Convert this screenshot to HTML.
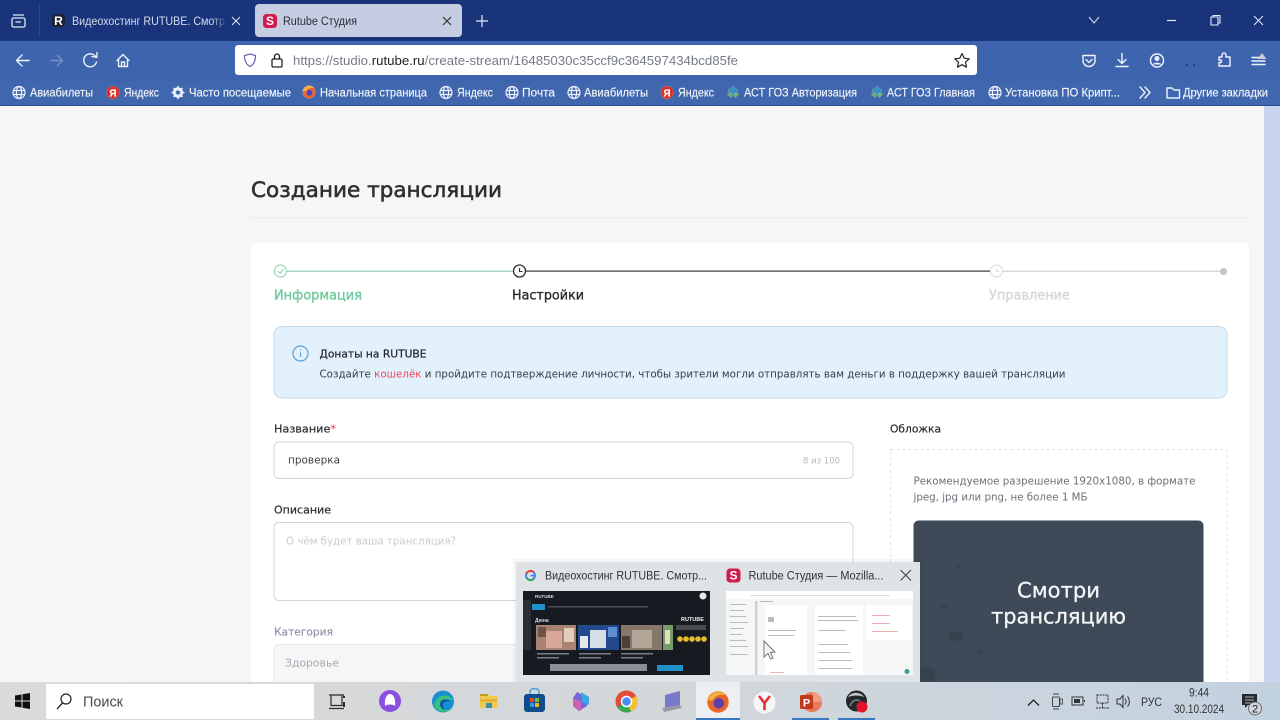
<!DOCTYPE html>
<html lang="ru"><head><meta charset="utf-8"><title>Rutube Студия</title>
<style>
html,body{margin:0;padding:0;width:1280px;height:720px;overflow:hidden;background:#f6f6f6}
svg{display:block}
text{white-space:pre}
.c{font-family:"Liberation Sans","Noto Sans CJK SC",sans-serif}
.p{font-family:"DejaVu Sans","Liberation Sans",sans-serif}
.w{fill:none;stroke:#eef2fa;stroke-width:1.4;stroke-linecap:round;stroke-linejoin:round}
.g{fill:none;stroke:#eef2fa;stroke-width:1.2}
.t{fill:none;stroke:#333;stroke-width:1.2;stroke-linecap:round;stroke-linejoin:round}
</style></head><body>
<svg width="1280" height="720" viewBox="0 0 1280 720" xmlns="http://www.w3.org/2000/svg">
<defs>
<linearGradient id="tb" x1="0" x2="1" y1="0" y2="0"><stop offset="0" stop-color="#dadada"/><stop offset=".5" stop-color="#d3d7da"/><stop offset="1" stop-color="#c3d2e0"/></linearGradient>
<linearGradient id="fade" x1="0" x2="1" y1="0" y2="0"><stop offset="0" stop-color="#19347b" stop-opacity="0"/><stop offset="1" stop-color="#19347b"/></linearGradient>
<filter id="b1" x="-2%" y="-2%" width="104%" height="104%"><feGaussianBlur stdDeviation=".6"/></filter>
<filter id="b2" x="-2%" y="-2%" width="104%" height="104%"><feGaussianBlur stdDeviation=".35"/></filter>
<g id="globe"><circle cx="0" cy="0" r="6" class="g"/><ellipse cx="0" cy="0" rx="2.6" ry="6" class="g"/><path d="M-6 -2H6M-6 2H6" class="g"/></g>
<g id="ya"><circle r="6.5" fill="#d9302c"/><text x="0" y="4" text-anchor="middle" class="c" font-size="10" font-weight="700" fill="#fff">Я</text></g>
<g id="ff"><circle r="6.5" fill="#e8662c"/><circle r="3.2" cx=".5" cy=".8" fill="#5a3fa8"/><path d="M-6 -1C-5 -6 1 -8 5 -4C2 -5 -2 -4 -3 -1Z" fill="#f4b23a"/></g>
<g id="ast"><path d="M0 -6L5 -2L3 4L-3 4L-5 -2Z" fill="#3a8fc4"/><path d="M-6 2L-2 6L-1 1Z" fill="#6fb04a"/><path d="M6 2L2 6L1 1Z" fill="#7bb24f"/></g>
<g id="s"><rect x="-7" y="-7" width="14" height="14" rx="3.5" fill="#d11a4d"/><text x="0" y="4.2" text-anchor="middle" class="c" font-size="12" font-weight="700" fill="#fff">S</text></g>
<clipPath id="page"><rect x="0" y="106" width="1280" height="576"/></clipPath>
</defs>

<!-- browser chrome -->
<rect width="1280" height="41" fill="#19347b"/>
<rect y="41" width="1280" height="41" fill="#3e64ae"/>
<rect y="82" width="1280" height="23" fill="#4066ae"/>
<rect y="105" width="1280" height="1" fill="#2a4a8c"/>

<!-- tab strip -->
<g fill="none" stroke="#dfe6f4" stroke-width="1.3"><rect x="12" y="18" width="13" height="9" rx="1.5"/><path d="M13 15H24M15.5 22H21"/></g>
<rect x="39" y="4" width="1" height="33" fill="#2d4a90"/>
<rect x="52" y="14" width="13" height="13" rx="3" fill="#1d2433"/>
<text x="58.5" y="25" text-anchor="middle" class="c" font-size="12" font-weight="700" fill="#fff">R</text>
<text x="72" y="25" class="c" font-size="11.5" fill="#d3dbec" textLength="153" lengthAdjust="spacingAndGlyphs">Видеохостинг RUTUBE. Смотр</text>
<rect x="212" y="8" width="15" height="26" fill="url(#fade)"/>
<path d="M232 17L240 25M240 17L232 25" stroke="#dfe6f4" stroke-width="1"/>
<rect x="255" y="4" width="207" height="33" rx="4" fill="#c5cde2"/>
<use href="#s" x="270" y="21"/>
<text x="283" y="25" class="c" font-size="11.5" fill="#2b2f3a" textLength="74" lengthAdjust="spacingAndGlyphs">Rutube Студия</text>
<path d="M443 17L451 25M451 17L443 25" stroke="#333" stroke-width="1.2"/>
<path d="M482 15V27M476 21H488" stroke="#e6ecf7" stroke-width="1.2"/>
<path d="M1089 17L1094 23L1099 17" fill="none" stroke="#c6d2e8" stroke-width="1.2"/>
<path d="M1167 20.500H1176" stroke="#e6ecf7" stroke-width="1.2"/>
<path d="M1211 17H1218V25H1211ZM1213 17V15.500H1220V23H1218" fill="none" stroke="#e6ecf7" stroke-width="1.1"/>
<path d="M1254 16L1263 25M1263 16L1254 25" stroke="#e6ecf7" stroke-width="1"/>

<!-- nav toolbar -->
<path d="M29 60.500H17M22 55L16.500 60.500L22 66" class="w"/>
<path d="M50 60.500H62M57 55L62.500 60.500L57 66" fill="none" stroke="#7390c8" stroke-width="1.4"/>
<path d="M95.500 56.500A6.500 6.500 0 1 0 96.500 62" class="w"/><path d="M92 56.500L96.800 57.500L97 52.500" class="w"/>
<path d="M117 60.500L123 54.500L129 60.500M118.500 59.500V66.500H127.500V59.500M121.500 66.500V62H124.500V66.500" class="w"/>
<rect x="235" y="45" width="742" height="30" rx="3" fill="#fff"/>
<path d="M250 54L255.500 55.500C255.500 61 254 64.500 250 66.500C246 64.500 244.500 61 244.500 55.500Z" fill="none" stroke="#6a62b8" stroke-width="1.2"/>
<rect x="272" y="59" width="10" height="8" rx="1.2" fill="none" stroke="#222" stroke-width="1.3"/><path d="M274.500 59V56.500A2.500 2.500 0 0 1 279.500 56.500V59" fill="none" stroke="#222" stroke-width="1.3"/>
<text y="65" class="c" font-size="12.500" fill="#767b85" x="293" textLength="445" lengthAdjust="spacingAndGlyphs">https://studio.<tspan fill="#222">rutube.ru</tspan>/create-stream/16485030c35ccf9c364597434bcd85fe</text>
<path d="M962 53.500L964.200 58.200L969.200 58.800L965.500 62.200L966.500 67.200L962 64.700L957.500 67.200L958.500 62.200L954.800 58.800L959.800 58.200Z" fill="none" stroke="#222" stroke-width="1.2" stroke-linejoin="round"/>
<path d="M1083 55.500H1095V60.500C1095 64 1092 66.500 1089 66.500C1086 66.500 1083 64 1083 60.500Z" class="w"/><path d="M1086 59.500L1089 62.500L1092 59.500" class="w"/>
<path d="M1122 53.500V63M1118 59.500L1122 63.500L1126 59.500M1116 66.500H1128" class="w"/>
<circle cx="1157" cy="60.500" r="6.500" class="w"/><circle cx="1157" cy="58.500" r="2.500" fill="#eef2fa"/><path d="M1152.500 64.500C1154 62 1160 62 1161.500 64.500Z" fill="#eef2fa"/>
<circle cx="1187" cy="65" r="1" fill="#24385f"/><circle cx="1194" cy="65" r="1" fill="#24385f"/>
<path d="M1219 57H1222V55A2 2 0 0 1 1226 55V57H1230V66H1219V62.500H1221A1.800 1.800 0 0 0 1221 60H1219Z" class="w"/>
<path d="M1252 57.500H1260M1252 61H1265M1252 64.500H1265" class="w"/><path d="M1262 53L1266.500 59H1257.500Z" fill="#c8cdd8"/>

<!-- bookmarks -->
<g class="c" font-size="11.500" fill="#f1f4fa" stroke="#f1f4fa" stroke-width=".15">
<use href="#globe" x="19" y="92.500"/><text x="30" y="96.500" textLength="63" lengthAdjust="spacingAndGlyphs">Авиабилеты</text>
<use href="#ya" x="113" y="92.500"/><text x="124" y="96.500" textLength="35" lengthAdjust="spacingAndGlyphs">Яндекс</text>
<circle cx="178" cy="92.500" r="4" fill="none" stroke="#eef2fa" stroke-width="2.400"/><path d="M178 86V99M171.500 92.500H184.500M173.500 88L182.500 97M182.500 88L173.500 97" stroke="#eef2fa" stroke-width="1.500"/><circle cx="178" cy="92.500" r="2" fill="#4066ae" stroke="none"/>
<text x="189" y="96.500" textLength="102" lengthAdjust="spacingAndGlyphs">Часто посещаемые</text>
<use href="#ff" x="309" y="92"/><text x="320" y="96.500" textLength="107" lengthAdjust="spacingAndGlyphs">Начальная страница</text>
<use href="#globe" x="446" y="92.500"/><text x="457" y="96.500" textLength="36" lengthAdjust="spacingAndGlyphs">Яндекс</text>
<use href="#globe" x="512" y="92.500"/><text x="522" y="96.500" textLength="33" lengthAdjust="spacingAndGlyphs">Почта</text>
<use href="#globe" x="574" y="92.500"/><text x="584" y="96.500" textLength="64" lengthAdjust="spacingAndGlyphs">Авиабилеты</text>
<use href="#ya" x="667" y="92.500"/><text x="678" y="96.500" textLength="36" lengthAdjust="spacingAndGlyphs">Яндекс</text>
<use href="#ast" x="733" y="92"/><text x="744" y="96.500" textLength="113" lengthAdjust="spacingAndGlyphs">АСТ ГОЗ Авторизация</text>
<use href="#ast" x="877" y="92"/><text x="887" y="96.500" textLength="88" lengthAdjust="spacingAndGlyphs">АСТ ГОЗ Главная</text>
<use href="#globe" x="995" y="92.500"/><text x="1005" y="96.500" textLength="115" lengthAdjust="spacingAndGlyphs">Установка ПО Крипт...</text>
<text x="1183" y="96.500" textLength="85" lengthAdjust="spacingAndGlyphs">Другие закладки</text>
</g>
<path d="M1140 87L1145 92.500L1140 98M1145 87L1150 92.500L1145 98" class="w"/>
<path d="M1167 88H1172L1174 90H1179.500V98H1167Z" class="w"/>

<!-- page -->
<g clip-path="url(#page)">
<rect y="106" width="1264" height="576" fill="#f6f6f6"/>
<rect x="1264" y="106" width="16" height="576" fill="#c9d5ee"/>
<text x="251" y="197" class="p" font-size="21" fill="#2e2e33" stroke="#2e2e33" stroke-width=".55" textLength="251" lengthAdjust="spacingAndGlyphs">Создание трансляции</text>
<rect x="251" y="217" width="998" height="1.500" fill="#efefef"/>
<rect x="251" y="243" width="998" height="460" rx="4" fill="#fff"/>

<!-- stepper -->
<rect x="287" y="270.700" width="226" height="1" fill="#7fcba6"/>
<rect x="526" y="270.500" width="464" height="1.200" fill="#33363b"/>
<rect x="1003" y="270.700" width="218" height="1" fill="#c4c6c9"/>
<circle cx="280.500" cy="271" r="6" fill="#fff" stroke="#9bd6b8" stroke-width="1.200"/><path d="M277.500 271L280 273.500L283.500 269" fill="none" stroke="#9bd6b8" stroke-width="1.100"/>
<circle cx="519.500" cy="271" r="6" fill="#fff" stroke="#2d3034" stroke-width="1.300"/><path d="M519.500 268V271.500H522.500" fill="none" stroke="#2d3034" stroke-width="1.100"/>
<circle cx="996.500" cy="271" r="6" fill="#fff" stroke="#dedfe2" stroke-width="1.200"/><path d="M996.500 268V271.500H999.500" fill="none" stroke="#dedfe2" stroke-width="1"/>
<circle cx="1223.500" cy="271.500" r="3.500" fill="#c2c4c7"/>
<g class="p" font-size="13">
<text x="274" y="299.500" fill="#6fcb9f" stroke="#6fcb9f" stroke-width=".4" textLength="88" lengthAdjust="spacingAndGlyphs">Информация</text>
<text x="512" y="299.500" fill="#2a2c30" stroke="#2a2c30" stroke-width=".35" textLength="72" lengthAdjust="spacingAndGlyphs">Настройки</text>
<text x="989" y="299.500" fill="#d5d7dd" stroke="#d5d7dd" stroke-width=".4" textLength="81" lengthAdjust="spacingAndGlyphs">Управление</text>
</g>

<!-- alert -->
<rect x="274" y="326.500" width="953" height="71.500" rx="8" fill="#e3f1fc" stroke="#c5d9e8"/>
<circle cx="300.500" cy="353.500" r="7.500" fill="none" stroke="#55a3d6" stroke-width="1.200"/>
<path d="M300.500 352.500V357M300.500 349.500V350.700" stroke="#55a3d6" stroke-width="1.100"/>
<g class="p" font-size="11">
<text x="319.500" y="357.500" fill="#1f2228" stroke="#1f2228" stroke-width=".2" textLength="107" lengthAdjust="spacingAndGlyphs">Донаты на RUTUBE</text>
<text x="319.500" y="377.500" fill="#3a3d44" textLength="746" lengthAdjust="spacingAndGlyphs">Создайте <tspan fill="#e9495c">кошелёк</tspan> и пройдите подтверждение личности, чтобы зрители могли отправлять вам деньги в поддержку вашей трансляции</text>
</g>

<!-- form fields -->
<rect x="274" y="442" width="579" height="36.500" rx="5" fill="#fff" stroke="#d2d4d8"/>
<rect x="274" y="522.500" width="579" height="78" rx="5" fill="#fff" stroke="#d2d4d8"/>
<rect x="274" y="644.500" width="579" height="50" rx="5" fill="#f6f6f7" stroke="#e6e7e9"/>
<g class="p" font-size="11">
<text x="274" y="432.500" fill="#2a2c30" stroke="#2a2c30" stroke-width=".2" textLength="62" lengthAdjust="spacingAndGlyphs">Название<tspan fill="#ec5b6e" stroke="#ec5b6e">*</tspan></text>
<text x="288" y="463.500" fill="#3c3f46" textLength="52" lengthAdjust="spacingAndGlyphs">проверка</text>
<text x="803" y="463.500" font-size="8.500" fill="#b5b8bd" textLength="37" lengthAdjust="spacingAndGlyphs">8 из 100</text>
<text x="274" y="513.500" fill="#2a2c30" stroke="#2a2c30" stroke-width=".2" textLength="57" lengthAdjust="spacingAndGlyphs">Описание</text>
<text x="286" y="544.500" fill="#c8cace" textLength="170" lengthAdjust="spacingAndGlyphs">О чём будет ваша трансляция?</text>
<text x="274" y="635.500" fill="#8e97a6" stroke="#8e97a6" stroke-width=".2" textLength="59" lengthAdjust="spacingAndGlyphs">Категория</text>
<text x="285" y="666.500" fill="#a5abb6" textLength="54" lengthAdjust="spacingAndGlyphs">Здоровье</text>
<text x="890" y="432.500" fill="#2a2c30" stroke="#2a2c30" stroke-width=".2" textLength="51" lengthAdjust="spacingAndGlyphs">Обложка</text>
<text x="913.500" y="484.500" fill="#6c6f76" textLength="282" lengthAdjust="spacingAndGlyphs">Рекомендуемое разрешение 1920x1080, в формате</text>
<text x="913.500" y="500.500" fill="#6c6f76" textLength="174" lengthAdjust="spacingAndGlyphs">jpeg, jpg или png, не более 1 МБ</text>
</g>

<rect x="890.500" y="449.500" width="336.500" height="260" fill="none" stroke="#dfe0e2" stroke-dasharray="3 3"/>
<rect x="913.500" y="520.500" width="290" height="190" rx="5" fill="#3f4a58"/>
<g fill="#38424f" filter="url(#b1)"><circle cx="958" cy="567" r="2.500"/><circle cx="944" cy="607" r="2.500"/><rect x="949" y="632" width="14" height="9"/><circle cx="980" cy="652" r="3"/><circle cx="928" cy="674" r="8"/></g>
<g class="p" font-size="21" fill="#f3f5f7" stroke="#f3f5f7" stroke-width=".3" text-anchor="middle">
<text x="1058.500" y="597.500" textLength="83" lengthAdjust="spacingAndGlyphs">Смотри</text>
<text x="1058.500" y="623.500" textLength="135" lengthAdjust="spacingAndGlyphs">трансляцию</text>
</g>

<!-- thumbnail popup -->
<rect x="513" y="559" width="409" height="125" fill="#000" opacity=".035"/>
<rect x="516" y="562" width="404" height="120" fill="#dfe3e6"/>
<g>
<circle cx="530.500" cy="575.500" r="4.500" fill="none" stroke="#4285f4" stroke-width="2"/>
<path d="M526.500 573.500A4.500 4.500 0 0 1 534 572.500" fill="none" stroke="#ea4335" stroke-width="2"/>
<path d="M526.500 577.500A4.500 4.500 0 0 0 533.500 579" fill="none" stroke="#34a853" stroke-width="2"/>
<rect x="530.500" y="574.700" width="5" height="1.800" fill="#4285f4"/>
<text x="545" y="579.500" class="c" font-size="11.500" fill="#30343a" textLength="162" lengthAdjust="spacingAndGlyphs">Видеохостинг RUTUBE. Смотр...</text>
<use href="#s" x="733.500" y="575.500"/>
<text x="748.500" y="579.500" class="c" font-size="11.500" fill="#30343a" textLength="135" lengthAdjust="spacingAndGlyphs">Rutube Студия — Mozilla...</text>
<path d="M900.500 570L911 580.500M911 570L900.500 580.500" stroke="#3a3d42" stroke-width="1"/>
</g>
<rect x="523" y="591" width="187" height="84" fill="#171a20"/>
<g filter="url(#b2)">
<text x="535" y="598" class="c" font-size="4.500" font-weight="700" fill="#d6d9de">RUTUBE</text>
<circle cx="703" cy="596" r="3.500" fill="#e8e8e8"/>
<rect x="532" y="604" width="13" height="6" fill="#2490c9"/><rect x="548" y="606" width="100" height="1.500" fill="#4a4e55"/>
<rect x="523" y="600" width="8" height="50" fill="#2a2e35"/>
<text x="535" y="622" class="c" font-size="5" font-weight="700" fill="#d6d9de">Дюна</text>
<text x="681" y="621" class="c" font-size="5.500" font-weight="700" fill="#eee">RUTUBE</text>
<rect x="536" y="625" width="40" height="25" fill="#a88372"/><rect x="546" y="631" width="16" height="17" fill="#d8a99b"/><rect x="538" y="627" width="8" height="10" fill="#6e5246"/><rect x="564" y="628" width="10" height="14" fill="#e0cdbd"/>
<rect x="578" y="625" width="41" height="25" fill="#244a8c"/><rect x="590" y="630" width="16" height="18" fill="#d5dfe8"/><rect x="580" y="636" width="8" height="12" fill="#e6e8ee"/><rect x="608" y="627" width="9" height="10" fill="#5b8ed0"/>
<rect x="621" y="625" width="41" height="25" fill="#85786a"/><rect x="632" y="630" width="20" height="18" fill="#b2a89a"/><rect x="622" y="636" width="8" height="12" fill="#4c4036"/>
<rect x="663" y="625" width="10" height="25" fill="#7a9a6a"/><rect x="665" y="630" width="5" height="14" fill="#dfe2b5"/>
<g fill="#e5bd2d"><circle cx="680" cy="639" r="2.800"/><circle cx="686" cy="639" r="2.800"/><circle cx="692" cy="639" r="2.800"/><circle cx="698" cy="639" r="2.800"/><circle cx="704" cy="639" r="2.800"/></g>
<rect x="676" y="625" width="30" height="5" fill="#6a6d72" opacity=".6"/>
<g fill="#7a7d83"><rect x="537" y="653" width="32" height="1.500"/><rect x="579" y="653" width="32" height="1.500"/><rect x="621" y="653" width="32" height="1.500"/><rect x="537" y="657" width="22" height="1.500"/><rect x="579" y="657" width="22" height="1.500"/><rect x="621" y="657" width="22" height="1.500"/></g>
<rect x="550" y="664" width="97" height="7" fill="#8b8e94"/><rect x="657" y="665" width="26" height="6" fill="#2490c9"/>
</g>

<rect x="726" y="591" width="187" height="84" fill="#f5f6f6"/>
<g filter="url(#b2)">
<rect x="726" y="591" width="187" height="8" fill="#fff"/><rect x="750" y="595" width="140" height="1" fill="#dcdcde"/>
<rect x="755" y="601" width="2.500" height="74" fill="#cfd0d2"/>
<rect x="765" y="605" width="42" height="70" fill="#fff"/><rect x="815" y="605" width="48" height="70" fill="#fff"/><rect x="866" y="605" width="46" height="35" fill="#fff"/>
<g fill="#b9bbbf">
<rect x="730" y="604" width="16" height="1"/><rect x="730" y="610" width="14" height="1"/><rect x="730" y="616" width="16" height="1"/><rect x="730" y="622" width="18" height="1"/><rect x="730" y="628" width="14" height="1"/><rect x="730" y="634" width="12" height="1"/><rect x="730" y="640" width="16" height="1"/><rect x="730" y="646" width="18" height="1"/><rect x="730" y="654" width="18" height="1"/><rect x="760" y="601" width="13" height="1"/>
<rect x="768" y="617" width="6" height="5"/><rect x="768" y="630" width="28" height="1"/><rect x="768" y="635" width="26" height="1"/>
<rect x="818" y="616" width="38" height="1"/><rect x="818" y="620" width="40" height="1"/><rect x="818" y="630" width="28" height="1"/><rect x="818" y="644" width="30" height="1"/><rect x="818" y="652" width="32" height="1"/><rect x="818" y="660" width="34" height="1"/><rect x="818" y="668" width="34" height="1"/></g>
<g fill="#ecb3b3"><rect x="872" y="615" width="18" height="1"/><rect x="872" y="623" width="18" height="1"/><rect x="872" y="631" width="26" height="1"/><rect x="770" y="672" width="14" height="1"/></g>
</g>
<circle cx="907" cy="671.500" r="2.500" fill="#3a9c93"/>
<path d="M764 641V657L768 653.500L770.500 659L773 658L770.500 652.500L775 652Z" fill="#f2f3f4" stroke="#6a6e74" stroke-width=".9"/>
</g>

<!-- taskbar -->
<rect y="682" width="1280" height="38" fill="url(#tb)"/>
<path d="M15 695.500L21.500 694.500V700.500H15ZM22.500 694.300L30 693V700.500H22.500ZM15 701.500H21.500V707.500L15 706.500ZM22.500 701.500H30V709L22.500 707.700Z" fill="#111"/>
<rect x="46" y="684" width="268" height="35" rx="1" fill="#fff"/>
<circle cx="66" cy="699" r="5" fill="none" stroke="#222" stroke-width="1.200"/><path d="M62.500 703L57 709" stroke="#222" stroke-width="1.300"/>
<text x="83" y="706.500" class="c" font-size="14.500" fill="#4a4a4a" textLength="40" lengthAdjust="spacingAndGlyphs">Поиск</text>
<path d="M331 695H342V705.500H331ZM329 695H344M329 708.500H344" fill="none" stroke="#2b2b2b" stroke-width="1.200"/><rect x="343" y="696" width="2" height="2" fill="#2b2b2b"/><rect x="343" y="702" width="2" height="5" fill="#2b2b2b"/>
<circle cx="390" cy="701" r="11" fill="#8a4ee0"/><path d="M385 706C384 698 387 694 390 694C393 694 396 698 395 706C393 704 387 704 385 706Z" fill="#fff"/>
<circle cx="443" cy="701.500" r="11" fill="#1a8fd4"/><path d="M434 705C436 694 450 692 453 701C449 698 441 699 442 705C443 710 448 711 451 709C446 714 436 712 434 705Z" fill="#37c47a"/><path d="M443 706C442 702 447 700 451 702C449 699 444 698 441 701C439 704 440 709 445 710Z" fill="#0e5aa7"/>
<path d="M480 694H488L490 696H497V708H480Z" fill="#f2c94c"/><rect x="480" y="699" width="17" height="3" fill="#e3b23c"/><rect x="486" y="703" width="6" height="5" fill="#3d8fa8"/><rect x="480" y="694" width="8" height="2" fill="#c69a2c"/>
<rect x="524" y="694" width="21" height="18" rx="3" fill="#0f4d8c"/><path d="M530 694V691.500A4.500 3 0 0 1 539 691.500V694" fill="none" stroke="#46a0d8" stroke-width="1.500"/>
<rect x="530" y="698" width="4" height="4" fill="#e2482c"/><rect x="535" y="698" width="4" height="4" fill="#7fb82c"/><rect x="530" y="703" width="4" height="4" fill="#2ba0e0"/><rect x="535" y="703" width="4" height="4" fill="#f3b21c"/>
<path d="M577 692L587 697V706L579 711L573 706V698Z" fill="#6f6ad8"/><path d="M573 698L581 702V711L573 706Z" fill="#d15fb8"/><path d="M581 692L589 697V705L582 702Z" fill="#3ea7e0"/>
<circle cx="626.500" cy="701.500" r="11" fill="#e24a3a"/><path d="M626.500 701.500L617 707A11 11 0 0 0 631 711.500Z" fill="#35a853"/><path d="M626.500 701.500L631 711.500A11 11 0 0 0 636 696Z" fill="#f5c033"/><circle cx="626.500" cy="701.500" r="5" fill="#4c8bf5" stroke="#fff" stroke-width="1.500"/>
<path d="M665 695L680 691V705L665 709Z" fill="#7a78c8"/><path d="M662 708L680 705L682 708L664 712Z" fill="#9a9aa6"/>
<rect x="696" y="682" width="44" height="38" fill="#fff" opacity=".6"/><rect x="696" y="718" width="44" height="2" fill="#3a78c2"/>
<use href="#ff" transform="translate(718 702) scale(1.650)"/>
<circle cx="764.500" cy="702.500" r="11" fill="#f6f6f6"/><path d="M759 696L764.500 703L770 696M764.500 703V710" fill="none" stroke="#e0343a" stroke-width="2.600"/>
<rect x="792" y="718" width="37" height="2" fill="#3a78c2"/>
<circle cx="812" cy="702" r="10" fill="#e8795a"/><path d="M812 692A10 10 0 0 1 822 702H812Z" fill="#ef9d7e"/><rect x="800" y="695" width="13" height="14" rx="1.500" fill="#c2391c"/><text x="806.500" y="706.500" text-anchor="middle" class="c" font-size="11" font-weight="700" fill="#fff">P</text>
<rect x="838" y="718" width="37" height="2" fill="#3a78c2"/>
<circle cx="856.500" cy="701" r="10.500" fill="#24272c"/><path d="M848 697C852 691 861 692 864 697C859 695 854 695 848 697Z" fill="#c6c8cc"/><path d="M850 706C852 700 857 699 860 701" fill="none" stroke="#7c8087" stroke-width="1.500"/><circle cx="862" cy="707" r="5.500" fill="#e5132a"/>

<path d="M1028 705.500L1033.500 700L1039 705.500" fill="none" stroke="#222" stroke-width="1.300"/>
<path d="M1053 694H1059M1053 709H1059" stroke="#444" stroke-width="1"/><rect x="1052.500" y="697" width="7" height="9.500" rx="1" fill="none" stroke="#444"/><rect x="1060" y="699" width="2.500" height="5" fill="none" stroke="#444" stroke-width=".8"/>
<rect x="1072" y="697" width="11" height="8" fill="none" stroke="#333"/><rect x="1074" y="699" width="6" height="4" fill="#333"/><rect x="1084" y="700" width="1" height="2" fill="#333"/>
<path d="M1097 695H1108V703H1097ZM1102.500 703V708M1096 708H1109" fill="none" stroke="#333" stroke-dasharray="2 .8"/>
<path d="M1117 699H1120L1123 695.500V707.500L1120 704H1117Z" fill="none" stroke="#333"/><path d="M1125 698.500C1126.500 700.500 1126.500 702.500 1125 704.500M1127.500 696.500C1130 699.500 1130 703.500 1127.500 706.500" fill="none" stroke="#333"/>
<text x="1141" y="706" class="c" font-size="11.500" fill="#333" textLength="21" lengthAdjust="spacingAndGlyphs">РУС</text>
<text x="1189" y="696.500" class="c" font-size="11.500" fill="#333" textLength="20" lengthAdjust="spacingAndGlyphs">9:44</text>
<text x="1174" y="713" class="c" font-size="11.500" fill="#333" textLength="50" lengthAdjust="spacingAndGlyphs">30.10.2024</text>
<path d="M1242 694H1257V705H1248L1245 708V705H1242Z" fill="#26292e"/><path d="M1245 697H1254M1245 700H1254M1245 703H1251" stroke="#ddd" stroke-width=".8"/>
<circle cx="1255" cy="708.500" r="6.500" fill="#cfd5da" stroke="#555" stroke-width=".8"/><text x="1255" y="712.500" text-anchor="middle" class="c" font-size="11" fill="#222">2</text>
</svg>
</body></html>
